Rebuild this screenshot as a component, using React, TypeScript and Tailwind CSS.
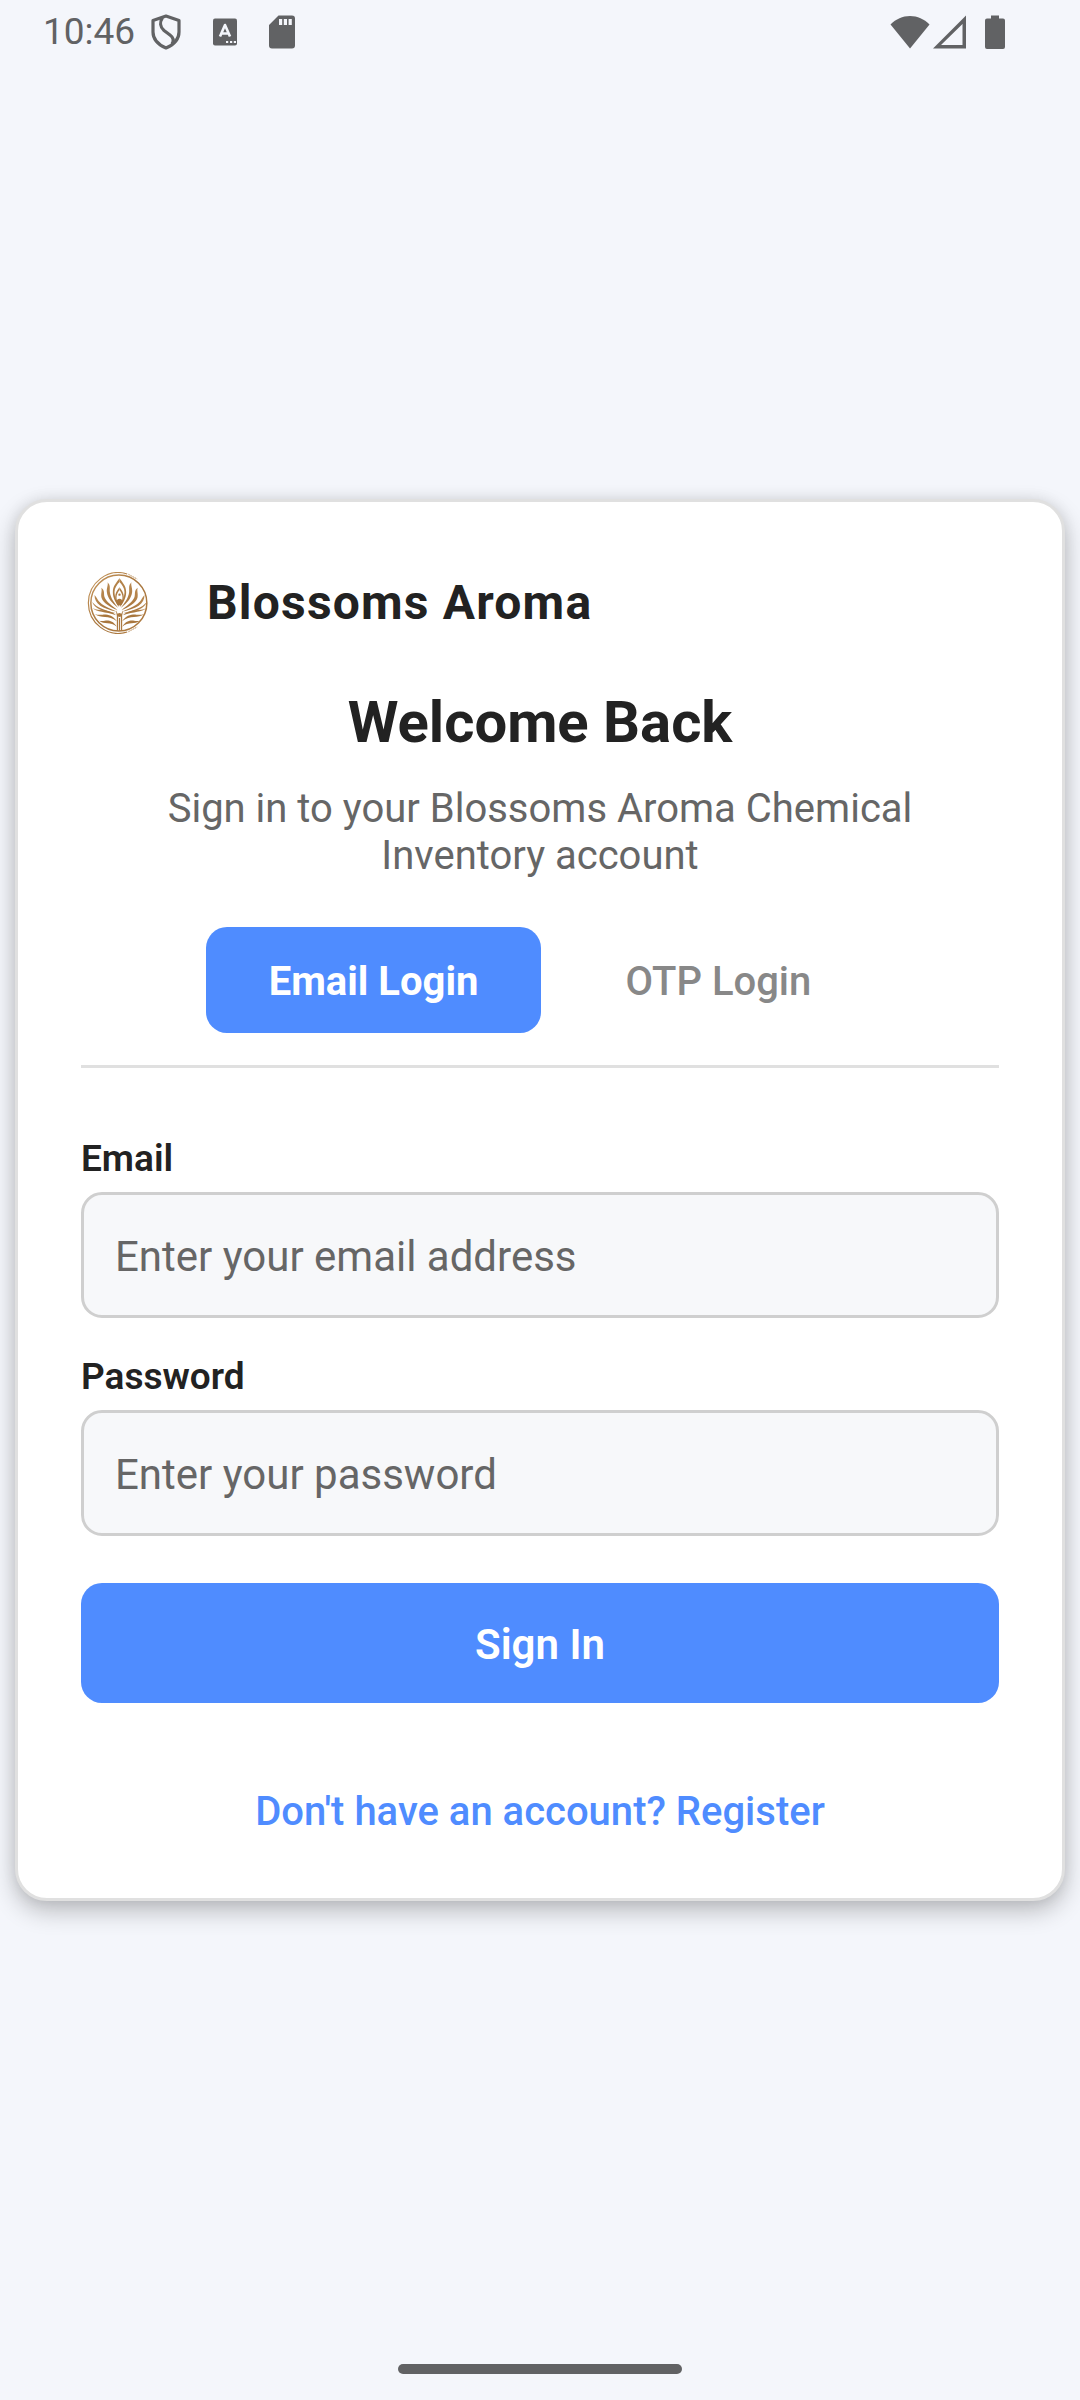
import { useState } from "react";

function ShieldIcon() {
  return (
    <svg viewBox="0 0 30 36" className="h-9 w-[30px]" fill="none" stroke="currentColor" strokeWidth="3.200" strokeLinejoin="round">
      <path d="M15 2 28 6.500V18c0 7.500-6 13-13 16C8 31 2 25.500 2 18V6.500Z" />
      <path d="M11.500 3.500C8.500 8 9 13 13 16.500l6 4.500c4 3 4 6 2 9" />
    </svg>
  );
}

function KeyboardIcon() {
  return (
    <svg viewBox="0 0 24 28" className="h-7 w-6">
      <rect width="24" height="27" y="0.500" rx="2" fill="currentColor" />
      <path d="M7 18.500 12 7l5 11.500M9 15.500h6" fill="none" stroke="#f4f6fb" strokeWidth="2.600" strokeLinejoin="round" />
      <path d="M13 23h2.200v2H13zM17 23h2.200v2H17zM20.800 23H23v2h-2.200z" fill="#f4f6fb" />
    </svg>
  );
}

function SdCardIcon() {
  return (
    <svg viewBox="0 0 26 34" className="h-[34px] w-[26px]">
      <path d="M9.500 0.500H23a3 3 0 0 1 3 3V30.500a3 3 0 0 1-3 3H3a3 3 0 0 1-3-3V10Z" fill="currentColor" />
      <path d="M10 4h3.200v6H10zM14.800 4H18v6h-3.200zM19.600 4h3.200v6h-3.200z" fill="#f4f6fb" />
    </svg>
  );
}

function WifiIcon() {
  return (
    <svg viewBox="0 0 40 34" className="h-[34px] w-10" fill="currentColor">
      <path d="M0.500 9.500C6 4 12.500 1 20 1s14 3 19.500 8.500L20 33.500Z" />
    </svg>
  );
}

function SignalIcon() {
  return (
    <svg viewBox="0 0 33 34" className="h-[34px] w-[33px]" fill="currentColor" fillRule="evenodd">
      <path d="M0 33.500 33 0.500V33.500ZM8 30H29.500V9Z" />
    </svg>
  );
}

function BatteryIcon() {
  return (
    <svg viewBox="0 0 20 34" className="h-[34px] w-5" fill="currentColor">
      <path d="M6 0.500h8V3.500h4a2 2 0 0 1 2 2V32a2 2 0 0 1-2 2H2a2 2 0 0 1-2-2V5.500a2 2 0 0 1 2-2h4Z" />
    </svg>
  );
}

function LotusHalf() {
  return (
    <g>
      <path d="M97 19C88 32 77 42 77 60c0 18 8 30 18 45-2-13-13-26-13-45 0-12 8-22 15-30Z" />
      <path d="M97 46c-7 9-13 17-13 30 0 12 5 20 12 27v-5c-5-6-8-13-8-22 0-9 5-16 9-22Z" />
      <path d="M61 31c3 8-3 16-2 29 2 18 15 33 34 48-11-15-23-30-25-48-1-11 3-20-7-29Z" />
      <path d="M42 47c4 9-2 17 1 30 5 17 26 27 48 38-15-14-34-25-39-40-3-11 2-20-10-28Z" />
      <path d="M22 69c0 28 24 41 67 50-25-11-45-20-54-31-5-6-6-12-13-19Z" />
      <path d="M15 90c7 20 31 29 72 34-32-9-57-16-72-34Z" />
      <path d="M17 108c12 13 36 10 70 22-11-10-24-14-37-15-13-1-24-1-33-7Z" />
      <path d="M23 126c18 15 42 1 66 22-11-18-29-21-42-20-9 1-17 1-24-2Z" />
      <path d="M36 146c15 13 34 1 53 18-11-19-27-20-36-18-6 1-11 1-17 0Z" />
      <path d="M86 114l7 14v48h-4v-45Z" />
    </g>
  );
}

function BrandLogo() {
  return (
    <svg viewBox="0 0 182 186" className="h-[62px] w-[61px] shrink-0" role="img" aria-label="Blossoms Aroma logo">
      <defs>
        <linearGradient id="brand-gold" gradientUnits="userSpaceOnUse" x1="10" y1="20" x2="170" y2="170">
          <stop offset="0" stopColor="#c4955c" />
          <stop offset="0.500" stopColor="#a8763d" />
          <stop offset="1" stopColor="#ae7b42" />
        </linearGradient>
      </defs>
      <g fill="none" stroke="url(#brand-gold)">
        <path d="M120 6A90 91 0 1 0 120 180" strokeWidth="3.600" />
        <ellipse cx="95" cy="93" rx="84" ry="84" strokeWidth="4.500" />
        <path d="M124 7l26 14M124 179l26-14" strokeWidth="3" strokeDasharray="4 3" />
      </g>
      <g fill="url(#brand-gold)">
        <LotusHalf />
        <g transform="translate(194 0) scale(-1 1)">
          <LotusHalf />
        </g>
        <ellipse cx="97" cy="90" rx="8.500" ry="10" />
        <circle cx="97" cy="68" r="3.500" />
        <circle cx="97" cy="129" r="6" />
        <path d="M95.500 138h3v38h-3z" />
      </g>
    </svg>
  );
}

type FieldProps = { id: string; type: string; label: string; placeholder: string };

function Field({ id, type, label, placeholder }: FieldProps) {
  return (
    <div className="flex flex-col gap-[11px]">
      <label htmlFor={id} className="text-[37px] leading-[44px] font-semibold text-[#222222]">
        {label}
      </label>
      <input
        id={id}
        type={type}
        placeholder={placeholder}
        className="h-[126px] w-full rounded-[21px] border-[3px] border-[#cfcfcf] bg-[#f7f8fa] px-[31px] pt-[2px] text-[42px] text-[#222222] outline-none placeholder:text-[#666666] placeholder:opacity-100"
      />
    </div>
  );
}

type Mode = "email" | "otp";
const modes: { id: Mode; label: string }[] = [
  { id: "email", label: "Email Login" },
  { id: "otp", label: "OTP Login" },
];

export default function App() {
  const [mode, setMode] = useState<Mode>("email");
  return (
    <div className="flex min-h-screen flex-col bg-[#f4f6fb] font-['Roboto',sans-serif]">
      <header className="flex h-[63px] items-center justify-between pr-[75px] pl-[43px] text-[#616264]">
        <div className="flex items-center">
          <time className="text-[37px] leading-[44px]">10:46</time>
          <div className="ml-4 flex items-center gap-8">
            <ShieldIcon />
            <KeyboardIcon />
            <SdCardIcon />
          </div>
        </div>
        <div className="flex items-center">
          <WifiIcon />
          <span className="ml-[3px]"><SignalIcon /></span>
          <span className="ml-[19px]"><BatteryIcon /></span>
        </div>
      </header>

      <main className="flex grow flex-col justify-center px-[15px]">
        <section className="rounded-[32px] border-[3px] border-[#e0e0e0] bg-white p-[63px] shadow-[0_10px_24px_rgba(0,0,0,0.24),0_0_14px_rgba(0,0,0,0.08)]">
          <div className="flex h-[76px] items-center gap-[59px] pl-[6px]">
            <BrandLogo />
            <span className="text-[48px] leading-[56px] font-bold tracking-wide text-[#222222]">Blossoms Aroma</span>
          </div>
          <h1 className="mt-[47px] text-center text-[58px] leading-[68px] font-bold text-[#222222]">Welcome Back</h1>
          <p className="mx-auto mt-[29px] max-w-[800px] text-center text-[40px] leading-[47px] text-[#666666]">
            Sign in to your Blossoms Aroma Chemical Inventory account
          </p>

          <div role="tablist" className="mt-12 flex justify-center gap-[21px] border-b-[3px] border-[#e0e0e0] pb-8">
            {modes.map(({ id, label }) => (
              <button
                key={id}
                type="button"
                role="tab"
                aria-selected={mode === id}
                onClick={() => setMode(id)}
                className={
                  mode === id
                    ? "h-[106px] rounded-[21px] bg-[#4f8cff] px-[63px] pt-1 text-[40px] font-bold text-white"
                    : "h-[106px] rounded-[21px] px-[63px] pt-1 text-[40px] font-medium text-[#888888]"
                }
              >
                {label}
              </button>
            ))}
          </div>

          <form className="mt-[69px] flex flex-col" onSubmit={(e) => e.preventDefault()}>
            <div className="flex flex-col gap-[37px]">
              <Field id="email" type="email" label="Email" placeholder="Enter your email address" />
              <Field id="password" type="password" label="Password" placeholder="Enter your password" />
            </div>
            <button type="submit" className="mt-[47px] h-[120px] rounded-[21px] bg-[#4f8cff] pt-[2px] text-[42px] font-semibold text-white">
              Sign In
            </button>
          </form>
          <a href="#register" className="mt-[85px] block text-center text-[40px] leading-[47px] font-medium text-[#4f8cff]">
            Don't have an account? Register
          </a>
        </section>
      </main>

      <footer className="flex h-[63px] items-center justify-center">
        <div className="h-[10px] w-[284px] rounded-full bg-[#616264]" />
      </footer>
    </div>
  );
}
